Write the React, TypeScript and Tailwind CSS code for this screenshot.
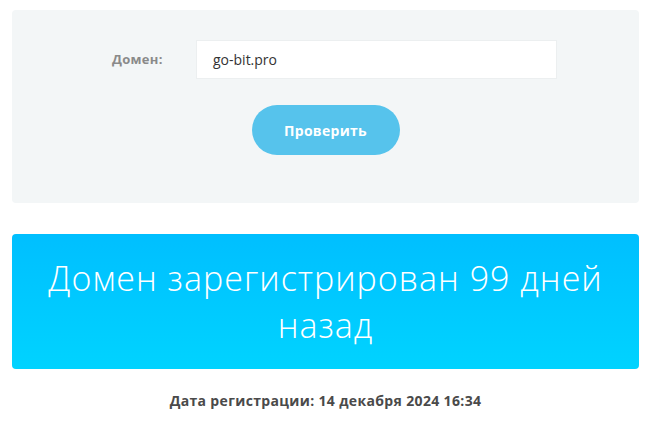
import React from "react";

export default function App() {
  return (
    <div className="w-[651px] h-[441px] bg-white px-[12px] pt-[10px]" style={{ fontFamily: '"Open Sans", "Noto Sans", sans-serif' }}>
      <div className="h-[193px] rounded-[4px] bg-[#f3f6f7] pt-[30px] flex flex-col items-center">
        <div className="flex items-center w-full pl-[100px]">
          <label className="w-[84px] text-[13px] font-bold tracking-[0.3px] text-[#8a8a8a]">Домен:</label>
          <div className="w-[361px] h-[39px] bg-white border border-[#eceff0] flex items-center pl-[16px] text-[14px] text-[#333]">
            go-bit.pro
          </div>
        </div>
        <button className="mt-[26px] w-[148px] h-[50px] rounded-full bg-[#56c3ec] text-white text-[14px] font-bold tracking-[0.3px]">
          Проверить
        </button>
      </div>
      <div className="mt-[31px] h-[135px] rounded-[4px] bg-gradient-to-b from-[#00bfff] to-[#00d3ff] flex items-center justify-center text-center">
        <div className="text-white text-[34px] font-light tracking-[1px] leading-[47px] px-[20px]">
          Домен зарегистрирован 99 дней<br />назад
        </div>
      </div>
      <div className="mt-[21px] text-center text-[14px] font-bold tracking-[0.35px] text-[#4a4a4a]">
        Дата регистрации: 14 декабря 2024 16:34
      </div>
    </div>
  );
}
